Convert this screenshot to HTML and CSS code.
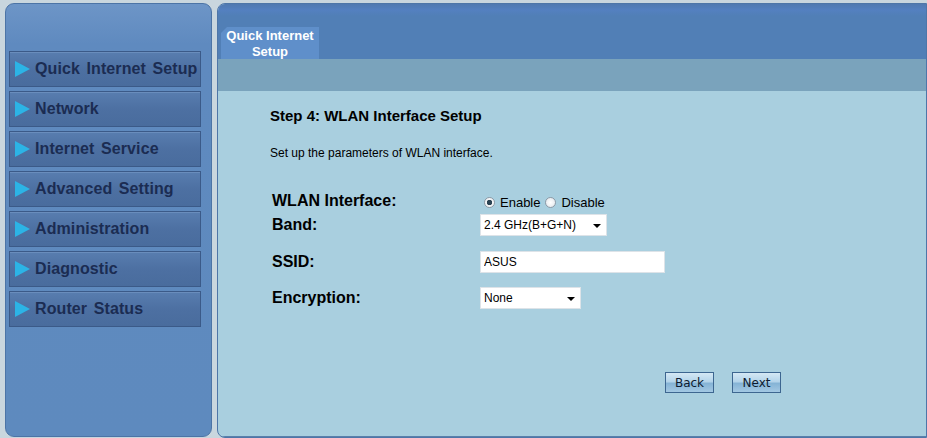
FILE: index.html
```html
<!DOCTYPE html>
<html lang="en">
<head>
  <meta charset="UTF-8">
  <title>Quick Internet Setup</title>
  <link rel="stylesheet" href="styles.css">
</head>
<body>

  <div class="page">

    <!-- menu da esquerda -->
    <div class="sidebar">
      <a class="menu-item" href="#"><span class="arrow"></span>Quick Internet Setup</a>
      <a class="menu-item" href="#"><span class="arrow"></span>Network</a>
      <a class="menu-item" href="#"><span class="arrow"></span>Internet Service</a>
      <a class="menu-item" href="#"><span class="arrow"></span>Advanced Setting</a>
      <a class="menu-item" href="#"><span class="arrow"></span>Administration</a>
      <a class="menu-item" href="#"><span class="arrow"></span>Diagnostic</a>
      <a class="menu-item" href="#"><span class="arrow"></span>Router Status</a>
    </div>

    <div class="main">
      <div class="header">
        <div class="tab">Quick Internet<br>Setup</div>
      </div>
      <div class="subbar"></div>

      <div class="content">
        <h2>Step 4: WLAN Interface Setup</h2>
        <p class="desc">Set up the parameters of WLAN interface.</p>

        <form class="setup-form">
          <div class="row row-radio">
            <label>WLAN Interface:</label>
            <div class="field">
              <input type="radio" name="wlan" id="en" checked>
              <span class="opt">Enable</span>
              <input type="radio" name="wlan" id="dis">
              <span class="opt">Disable</span>
            </div>
          </div>
          <div class="row row-band">
            <label>Band:</label>
            <div class="select band">
              <select><option>2.4 GHz(B+G+N)</option></select>
            </div>
          </div>
          <div class="row row-ssid">
            <label>SSID:</label>
            <input type="text" class="text-input" value="ASUS">
          </div>
          <div class="row row-enc">
            <label>Encryption:</label>
            <div class="select enc">
              <select><option>None</option></select>
            </div>
          </div>

          <div class="buttons">
            <button type="button">Back</button>
            <button type="button">Next</button>
          </div>
        </form>
      </div>
    </div>

  </div>

</body>
</html>
```

FILE: styles.css
```css
body {
  margin: 0;
  background-color: #c9d6de;
  font-family: "Liberation Sans", Arial, sans-serif;
  overflow: hidden;
}

.page {
  display: flex;
  gap: 5px;
  padding: 3px 0 0 5px;
  height: 435px;
}

/* ---- menu ---- */

.sidebar {
  width: 192px;
  height: 385px;
  padding: 47px 10px 0 3px;
  background: linear-gradient(to bottom, #6d95c7 0px, #5f8abf 40px, #5e8abe 100%);
  border: 1px solid #4c74a6;
  border-radius: 9px;
  display: flex;
  flex-direction: column;
  gap: 4px;
}

.menu-item {
  display: flex;
  align-items: center;
  height: 34px;
  padding-left: 5px;
  background: linear-gradient(to bottom, #587daf 0%, #4d70a2 50%, #496c9d 100%);
  border: 1px solid #3b5a88;
  box-shadow: inset 0 1px 0 #6a8dbc;
  color: #1b2c52;
  font-size: 16px;
  font-weight: bold;
  letter-spacing: 0.1px;
  word-spacing: 2px;
  text-decoration: none;
}

.arrow {
  width: 0;
  height: 0;
  margin-right: 5px;
  border-top: 8px solid transparent;
  border-bottom: 8px solid transparent;
  border-left: 15px solid #2cb4e6;
}

/* ---- painel principal ---- */

.main {
  flex: 1;
  display: flex;
  flex-direction: column;
  border: 1px solid #4e76a8;
  border-radius: 8px 0 0 8px;
  overflow: hidden;
  background-color: #a9cfdf;
}

.header {
  height: 55px;
  background: linear-gradient(to bottom, #5079b0 0px, #5480c0 6px, #517fb6 12px, #517fb6 100%);
  display: flex;
  align-items: flex-end;
  padding-left: 3px;
}

.tab {
  width: 98px;
  height: 32px;
  background-color: #5f8fca;
  color: #fff;
  font-size: 13px;
  font-weight: bold;
  text-align: center;
  line-height: 16px;
  padding-top: 1px;
  box-sizing: border-box;
  clip-path: polygon(6px 0, 100% 0, 100% 100%, 0 100%, 0 6px);
}

.subbar {
  height: 32px;
  background-color: #7aa3bc;
}

.content {
  flex: 1;
  padding: 16px 0 0 52px;
  border-bottom: 1px solid #5a80aa;
}

h2 {
  margin: 0;
  font-size: 15px;
  color: #000;
}

.desc {
  margin: 22px 0 0;
  font-size: 12px;
  color: #000;
}

.setup-form {
  margin-top: 29px;
}

.row {
  display: flex;
  align-items: center;
  height: 24px;
}

.row label {
  width: 208px;
  padding-left: 2px;
  font-size: 16px;
  font-weight: bold;
  color: #000;
}

.row-ssid {
  margin-top: 13px;
}

.row-enc {
  margin-top: 12px;
}

.field {
  display: flex;
  align-items: center;
  padding-top: 3px;
  font-size: 13px;
  color: #000;
}

input[type="radio"] {
  appearance: none;
  width: 11px;
  height: 11px;
  margin: 0 5px 0 4px;
  border: 1px solid #8d9aa6;
  border-radius: 50%;
  background: radial-gradient(circle, #fff 0%, #dfe4ea 100%);
}

input[type="radio"]:checked {
  background: radial-gradient(circle, #2b4353 0 2.5px, #f2f4f6 3px);
}

.opt {
  margin-right: 1px;
}

.select {
  position: relative;
  height: 22px;
  background-color: #fff;
  border: 1px solid #dde3e8;
  box-sizing: border-box;
}

.select select {
  appearance: none;
  border: none;
  background: transparent;
  height: 100%;
  width: 100%;
  padding: 0 0 0 3px;
  font-family: "Liberation Sans", Arial, sans-serif;
  font-size: 12px;
  color: #000;
}

.select::after {
  content: "";
  position: absolute;
  right: 5px;
  top: 9px;
  border-left: 4px solid transparent;
  border-right: 4px solid transparent;
  border-top: 4px solid #000;
  pointer-events: none;
}

.band {
  width: 127px;
}

.enc {
  width: 101px;
}

.text-input {
  width: 185px;
  height: 22px;
  box-sizing: border-box;
  border: 1px solid #dde3e8;
  padding: 0 0 0 3px;
  font-family: "Liberation Sans", Arial, sans-serif;
  font-size: 12px;
}

.buttons {
  display: flex;
  gap: 18px;
  margin: 62px 0 0 395px;
}

.buttons button {
  width: 49px;
  height: 21px;
  padding: 0;
  border: 1px solid #3d6690;
  background: linear-gradient(to bottom, #d4e8f4 0%, #b4d4ea 45%, #86b4d6 55%, #a3c8e3 100%);
  font-family: "DejaVu Sans", Verdana, sans-serif;
  font-size: 12px;
  color: #0d1b30;
  cursor: pointer;
}
```
